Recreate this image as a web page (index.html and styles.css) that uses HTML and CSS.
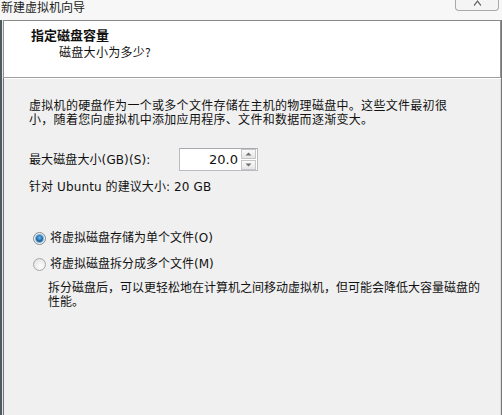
FILE: index.html
```html
<!DOCTYPE html>
<html lang="zh-CN">
<head>
<meta charset="utf-8">
<title>新建虚拟机向导</title>
<link rel="stylesheet" href="styles.css">
</head>
<body>
<div class="window">
  <div class="titlebar">
    <span class="title">新建虚拟机向导</span>
    <div class="close">
      <svg width="43" height="10" viewBox="0 0 43 10"><path d="M18.5 5.5 L22 1 L25.5 5.5" fill="none" stroke="#fff" stroke-width="3.4"/><path d="M18.5 5.5 L22 1 L25.5 5.5" fill="none" stroke="#6a6a6a" stroke-width="1.4"/></svg>
    </div>
  </div>
  <div class="frame">
    <div class="header">
      <div class="h-title">指定磁盘容量</div>
      <div class="h-sub">磁盘大小为多少?</div>
    </div>
    <div class="content">
      <p class="intro">虚拟机的硬盘作为一个或多个文件存储在主机的物理磁盘中。这些文件最初很<br>小，随着您向虚拟机中添加应用程序、文件和数据而逐渐变大。</p>
      <div class="size-row">
        <span class="size-label">最大磁盘大小(GB)(S):</span>
        <div class="spin">
          <span class="spin-value">20.0</span>
          <div class="spin-btns">
            <span class="spin-btn"><svg width="7" height="4" viewBox="0 0 7 4"><path d="M0.5 3.5 L3.5 0.5 L6.5 3.5Z" fill="#6d6d6d"/></svg></span>
            <span class="spin-btn"><svg width="7" height="4" viewBox="0 0 7 4"><path d="M0.5 0.5 L3.5 3.5 L6.5 0.5Z" fill="#6d6d6d"/></svg></span>
          </div>
        </div>
      </div>
      <p class="hint">针对 Ubuntu 的建议大小: 20 GB</p>
      <div class="radio-row first">
        <span class="radio checked"><span class="dot"></span></span>
        <span class="radio-label">将虚拟磁盘存储为单个文件(O)</span>
      </div>
      <div class="radio-row second">
        <span class="radio"></span>
        <span class="radio-label">将虚拟磁盘拆分成多个文件(M)</span>
      </div>
      <p class="desc">拆分磁盘后，可以更轻松地在计算机之间移动虚拟机，但可能会降低大容量磁盘的<br>性能。</p>
    </div>
  </div>
</div>
</body>
</html>
```

FILE: styles.css
```css
* { box-sizing: border-box; }
html, body { margin: 0; padding: 0; }
body {
  width: 502px;
  height: 415px;
  overflow: hidden;
  background: #f0f0f0;
  font-family: "DejaVu Sans", "Noto Sans CJK SC", sans-serif;
  font-size: 12px;
  color: #111;
}
.window {
  width: 502px;
  height: 415px;
  display: flex;
  flex-direction: column;
}
.titlebar {
  height: 20px;
  background: #f7f7f7;
  display: flex;
  justify-content: space-between;
  align-items: flex-start;
}
.title {
  line-height: 14px;
  margin-left: 1px;
  color: #222;
  font-family: "Noto Sans CJK SC", sans-serif;
}
.close {
  width: 44px;
  height: 11px;
  margin-right: 3px;
  border: 1px solid #a9a9a9;
  border-top: none;
  border-radius: 0 0 4px 4px;
  background: #f4f4f4;
  display: flex;
}
.close svg { display: block; }
.frame {
  flex: 1;
  display: flex;
  flex-direction: column;
  border-left: 2px solid #4d5a60;
  border-right: 1px solid #777;
  box-shadow: inset 1px 0 0 #e6e6e6, inset 2px 0 0 #6e7478, inset -1px 0 0 #dcdcdc;
  padding-left: 2px;
}
.header {
  height: 58px;
  background: #fff;
  border-top: 1px solid #8a8a8a;
  border-bottom: 1px solid #a0a0a0;
  border-right: 1px solid #909090;
  margin-left: -1px;
  border-left: 1px solid #909090;
  padding: 6px 0 0 27px;
}
.h-title {
  font-family: "Noto Sans CJK SC", sans-serif;
  font-weight: bold;
  font-size: 13px;
  line-height: 16px;
}
.h-sub {
  font-family: "Noto Sans CJK SC", sans-serif;
  line-height: 14px;
  margin-top: 2px;
  padding-left: 28px;
  letter-spacing: 0.3px;
}
.content {
  flex: 1;
  padding: 20px 0 0 25px;
  border-top: 1px solid #fff;
}
p { margin: 0; }
.intro {
  line-height: 14px;
  letter-spacing: 0.3px;
}
.size-row {
  display: flex;
  align-items: center;
  margin-top: 21px;
}
.size-label {
  width: 150px;
  letter-spacing: 0.1px;
  line-height: 14px;
}
.spin {
  width: 79px;
  height: 23px;
  background: #fff;
  border: 1px solid #b8bcc2;
  border-top-color: #a6a9ae;
  display: flex;
  align-items: center;
  justify-content: flex-end;
}
.spin-value {
  font-size: 13px;
  margin-right: 2px;
  line-height: 14px;
}
.spin-btns {
  width: 17px;
  height: 21px;
  display: flex;
  flex-direction: column;
  gap: 1px;
  padding: 0 1px;
}
.spin-btn {
  flex: 1;
  border: 1px solid #c6c6c6;
  background: linear-gradient(#fafafa, #e6e6e6);
  display: flex;
  align-items: center;
  justify-content: center;
}
.spin-btn svg { display: block; }
.hint {
  margin-top: 9px;
  line-height: 14px;
  letter-spacing: 0.1px;
}
.radio-row {
  display: flex;
  align-items: center;
  height: 16px;
}
.radio-row.first { margin-top: 36px; }
.radio-row.second { margin-top: 10px; }
.radio {
  width: 13px;
  height: 13px;
  border-radius: 50%;
  margin-left: 4px;
  margin-right: 4px;
  border: 1px solid #a8a8a8;
  background: radial-gradient(circle at 60% 65%, #fdfdfd 0%, #e6e6e6 70%, #d4d4d4 100%);
  display: flex;
  align-items: center;
  justify-content: center;
}
.radio.checked {
  border-color: #8a8a8a;
  background: radial-gradient(circle, #c8dcec 0%, #eef4f8 70%, #dcdcdc 100%);
}
.dot {
  width: 7px;
  height: 7px;
  border-radius: 50%;
  background: radial-gradient(circle at 50% 40%, #6fb8f0 0%, #1f6aa8 55%, #0f3e66 100%);
  box-shadow: 0 0 0 1px #7fb0d8;
}
.radio-label {
  line-height: 16px;
}
.desc {
  margin-top: 9px;
  margin-left: 19px;
  line-height: 14px;
}
```
